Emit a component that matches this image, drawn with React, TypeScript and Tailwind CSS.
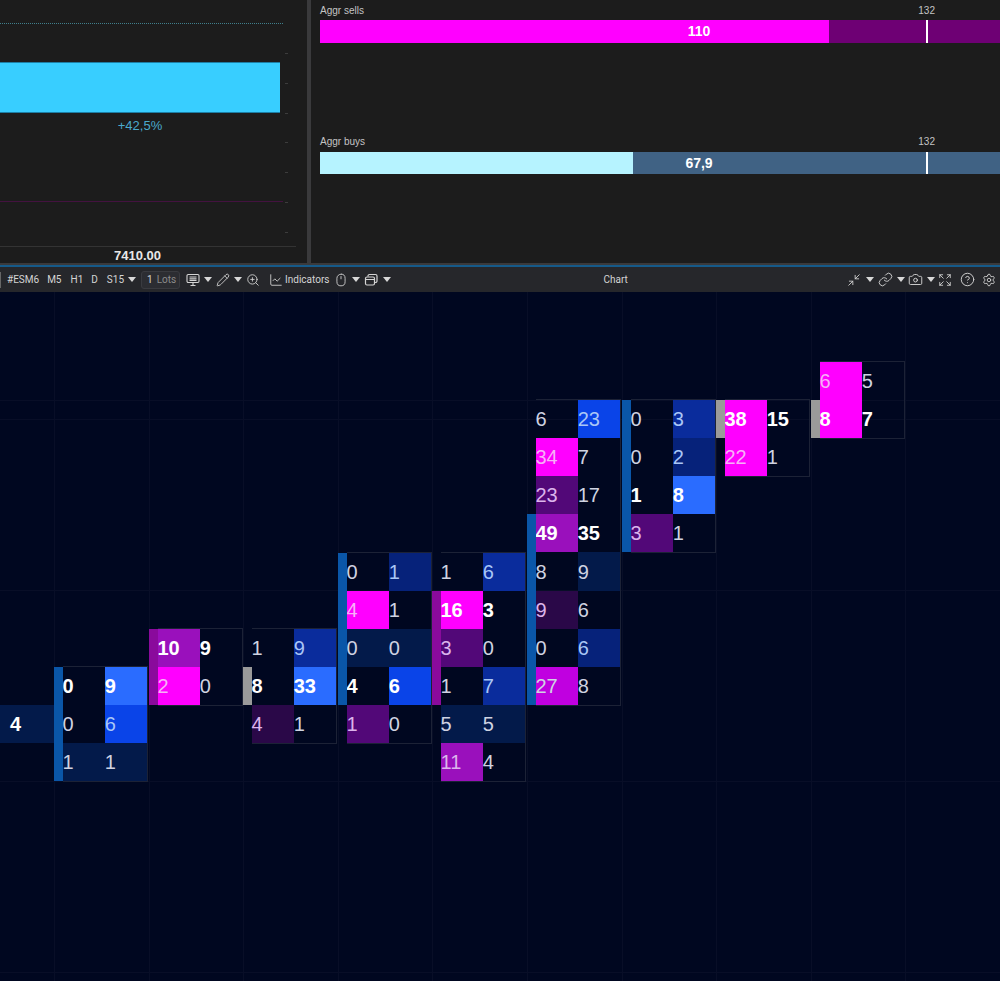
import {
  Camera,
  ChartLine,
  CircleHelp,
  Expand,
  Link,
  Minimize2,
  Mouse,
  Pencil,
  Settings,
  ZoomIn,
} from "lucide-react";

type Cell = { v: string; bg?: string; bold?: boolean };
type Cluster = {
  left: number;
  row: number;
  bar?: string;
  barFrom?: number;
  barRows?: number;
  rows: [Cell, Cell][];
};

const ROW = 38.1;
const TOP = 70; // first row, from top of chart area

const M = "bg-[#ff00ff]";
const M2 = "bg-[#9a10bc]";
const M3 = "bg-[#520878]";
const M4 = "bg-[#2a0848]";
const B1 = "bg-[#2a6cff]";
const B2 = "bg-[#0a44e8]";
const B3 = "bg-[#0a2c9c]";
const B4 = "bg-[#06227a]";
const B5 = "bg-[#031a4a]";

const BLUE = "bg-[#0a56a8]";
const PURPLE = "bg-[#8a0a9c]";
const GREY = "bg-[#9a9a9a]";

// thin digits pick up the colour of the cell under them
const tint = (bg?: string) => {
  if (bg === M) return "text-[#f7b0f7]";
  if (bg === M2 || bg === M3 || bg === M4) return "text-[#dcb4ec]";
  if (bg === B1 || bg === B2 || bg === B3 || bg === B4) return "text-[#a9c6f6]";
  return "text-[#cfd3e2]";
};

const clusters: Cluster[] = [
  { left: 54, row: 8, bar: BLUE, barFrom: 0, barRows: 3, rows: [
    [{ v: "0", bold: true }, { v: "9", bold: true, bg: B1 }],
    [{ v: "0" }, { v: "6", bg: B2 }],
    [{ v: "1", bg: B5 }, { v: "1", bg: B5 }],
  ] },
  { left: 149, row: 7, bar: PURPLE, barFrom: 0, barRows: 2, rows: [
    [{ v: "10", bold: true, bg: M2 }, { v: "9", bold: true }],
    [{ v: "2", bg: M }, { v: "0" }],
  ] },
  { left: 243, row: 7, bar: GREY, barFrom: 1, barRows: 1, rows: [
    [{ v: "1" }, { v: "9", bg: B3 }],
    [{ v: "8", bold: true }, { v: "33", bold: true, bg: B1 }],
    [{ v: "4", bg: M4 }, { v: "1" }],
  ] },
  { left: 338, row: 5, bar: BLUE, barFrom: 0, barRows: 4, rows: [
    [{ v: "0" }, { v: "1", bg: B4 }],
    [{ v: "4", bg: M }, { v: "1" }],
    [{ v: "0", bg: B5 }, { v: "0", bg: B5 }],
    [{ v: "4", bold: true }, { v: "6", bold: true, bg: B2 }],
    [{ v: "1", bg: M3 }, { v: "0" }],
  ] },
  { left: 432, row: 5, bar: PURPLE, barFrom: 1, barRows: 3, rows: [
    [{ v: "1" }, { v: "6", bg: B3 }],
    [{ v: "16", bold: true, bg: M }, { v: "3", bold: true }],
    [{ v: "3", bg: M3 }, { v: "0" }],
    [{ v: "1" }, { v: "7", bg: B3 }],
    [{ v: "5", bg: B5 }, { v: "5", bg: B5 }],
    [{ v: "11", bg: M2 }, { v: "4" }],
  ] },
  { left: 527, row: 1, bar: BLUE, barFrom: 3, barRows: 5, rows: [
    [{ v: "6" }, { v: "23", bg: B2 }],
    [{ v: "34", bg: M }, { v: "7" }],
    [{ v: "23", bg: M3 }, { v: "17" }],
    [{ v: "49", bold: true, bg: M2 }, { v: "35", bold: true }],
    [{ v: "8" }, { v: "9", bg: B5 }],
    [{ v: "9", bg: M4 }, { v: "6" }],
    [{ v: "0" }, { v: "6", bg: B4 }],
    [{ v: "27", bg: "bg-[#c000e0]" }, { v: "8" }],
  ] },
  { left: 622, row: 1, bar: BLUE, barFrom: 0, barRows: 4, rows: [
    [{ v: "0" }, { v: "3", bg: B3 }],
    [{ v: "0" }, { v: "2", bg: B4 }],
    [{ v: "1", bold: true }, { v: "8", bold: true, bg: B1 }],
    [{ v: "3", bg: M3 }, { v: "1" }],
  ] },
  { left: 716, row: 1, bar: GREY, barFrom: 0, barRows: 1, rows: [
    [{ v: "38", bold: true, bg: M }, { v: "15", bold: true }],
    [{ v: "22", bg: M }, { v: "1" }],
  ] },
  { left: 811, row: 0, bar: GREY, barFrom: 1, barRows: 1, rows: [
    [{ v: "6", bg: M }, { v: "5" }],
    [{ v: "8", bold: true, bg: M }, { v: "7", bold: true }],
  ] },
];

const gridX = [54, 149, 243, 338, 432, 527, 622, 716, 811, 905];
const gridY = [108, 127, 298, 489, 680];

function Caret({ className = "" }: { className?: string }) {
  return <span className={`h-0 w-0 shrink-0 border-x-[4px] border-t-[5px] border-x-transparent border-t-[#d8d8d8] ${className}`} />;
}

function ClusterView({ c }: { c: Cluster }) {
  return (
    <div className="absolute flex" style={{ left: c.left, top: TOP + c.row * ROW }}>
      <div className="relative w-[8.5px]">
        <div
          className={`absolute inset-x-0 ${c.bar}`}
          style={{ top: (c.barFrom ?? 0) * ROW, height: (c.barRows ?? 0) * ROW }}
        />
      </div>
      <div className="-mt-px border border-l-0 border-[#1c2236]">
        {c.rows.map((r, i) => (
          <div key={i} className="flex" style={{ height: ROW }}>
            {r.map((cell, j) => (
              <div
                key={j}
                className={`flex w-[42.2px] items-center text-[20px] ${cell.bg ?? ""} ${
                  cell.bold ? "font-bold text-white" : tint(cell.bg)
                }`}
              >
                {cell.v}
              </div>
            ))}
          </div>
        ))}
      </div>
    </div>
  );
}

function PressureBar({ label, fill, rest, value, width }: {
  label: string;
  fill: string;
  rest: string;
  value: string;
  width: number;
}) {
  return (
    <div>
      <div className="flex h-[20px] items-center justify-between text-[10px] text-[#c4c4c4]">
        <span>{label}</span>
        <span className="mr-[65px]">132</span>
      </div>
      <div className={`relative h-[22.6px] ${rest}`}>
        <div className={`h-full ${fill}`} style={{ width }} />
        <span className="absolute left-[359px] top-0 w-[40px] text-center text-[14px] font-bold leading-[23px] text-white">
          {value}
        </span>
        <div className="absolute left-[606px] top-0 h-full w-[1.5px] bg-white" />
      </div>
    </div>
  );
}

export default function App() {
  return (
    <div className="relative h-[981px] w-[1000px] overflow-hidden bg-[#000720] font-['Liberation_Sans',sans-serif]">
      {/* Upper panels */}
      <div className="flex h-[263px] bg-[#1c1c1c]">
        <div className="relative w-[307px] shrink-0">
          <div className="h-[23px]" />
          <div className="w-[283px] border-t border-dotted border-[#3f7f8c]" />
          <div className="h-[38px]" />
          <div className="h-[51px] w-[280px] border-y border-[#1d7fa6] bg-[#38ceff]" />
          <div className="w-[280px] pt-[4px] text-center text-[13px] leading-[18px] text-[#4aa9cc]">+42,5%</div>
          <div className="h-[66px]" />
          <div className="w-[283px] border-t border-[#43123f]" />
          <div className="h-[44px]" />
          <div className="w-[296px] border-t border-[#333333]" />
          <div className="w-[275px] text-center text-[13px] font-bold leading-[17px] text-[#e8e8e8]">7410.00</div>
          {[53, 83, 113, 142, 172, 202, 232].map((y) => (
            <div key={y} className="absolute left-[285px] h-px w-[3px] bg-[#3c3c3c]" style={{ top: y }} />
          ))}
        </div>
        <div className="w-[4px] shrink-0 bg-[#3a3a3c]" />
        <div className="flex-1 pl-[9px]">
          <PressureBar label="Aggr sells" fill={M} rest="bg-[#6e0074]" value="110" width={509} />
          <div className="mt-[89px]">
            <PressureBar label="Aggr buys" fill="bg-[#b6f3ff]" rest="bg-[#406284]" value="67,9" width={313} />
          </div>
        </div>
      </div>
      <div className="h-[2px] bg-[#3a3a3c]" />

      {/* Toolbar */}
      <div className="h-[2px] bg-[#155a8a]" />
      <div className="flex h-[25px] items-center bg-[#26272b] font-['Roboto',sans-serif] text-[10px] text-[#d4d4d4]">
        <div className="h-[16px] w-[1px] bg-[#666666]" />
        <span className="ml-[6px]">#ESM6</span>
        <span className="ml-[8px]">M5</span>
        <span className="ml-[9px]">H1</span>
        <span className="ml-[8px]">D</span>
        <span className="ml-[9px]">S15</span>
        <Caret className="ml-[4px]" />
        <div className="ml-[5px] flex h-[18px] w-[39px] shrink-0 items-center rounded-[3px] border border-[#3a3b40] bg-[#2c2d32] pl-[5px]">
          <span>1</span>
          <span className="ml-[4px] text-[#8c8c8c]">Lots</span>
        </div>
        <svg viewBox="0 0 14 14" className="ml-[6px] h-[14px] w-[14px]" fill="none" stroke="currentColor" strokeWidth="1.1">
          <rect x="1" y="1.5" width="12" height="8" rx="1.2" />
          <path d="M3.5 4h7M3.5 5.7h7M3.5 7.4h7M7 9.5v2.5M4.5 12.5h5" />
        </svg>
        <Caret className="ml-[4px]" />
        <Pencil className="ml-[4px] h-[14px] w-[14px]" strokeWidth={1.5} />
        <Caret className="ml-[4px]" />
        <ZoomIn className="ml-[4px] h-[14px] w-[14px]" strokeWidth={1.5} />
        <ChartLine className="ml-[9px] h-[14px] w-[14px]" strokeWidth={1.5} />
        <span className="ml-[2px]">Indicators</span>
        <Mouse className="ml-[5px] h-[14px] w-[14px]" strokeWidth={1.5} />
        <Caret className="ml-[4px]" />
        <svg viewBox="0 0 14 14" className="ml-[4px] h-[14px] w-[14px]" fill="none" stroke="currentColor" strokeWidth="1.2">
          <rect x="1.5" y="4" width="9" height="8" rx="1.5" />
          <path d="M4 3.5V3a1.5 1.5 0 0 1 1.5-1.5h6A1.5 1.5 0 0 1 13 3v5a1.5 1.5 0 0 1-2 1.4M1.5 6.5h9" />
        </svg>
        <Caret className="ml-[5px]" />
        <span className="ml-[212px]">Chart</span>
        <div className="ml-auto flex items-center pr-[4px]">
          <Minimize2 className="h-[14px] w-[14px]" strokeWidth={1.5} />
          <Caret className="ml-[5px]" />
          <Link className="ml-[4px] h-[15px] w-[15px]" strokeWidth={1.5} />
          <Caret className="ml-[4px]" />
          <Camera className="ml-[3px] h-[15px] w-[15px]" strokeWidth={1.5} />
          <Caret className="ml-[4px]" />
          <Expand className="ml-[3px] h-[14px] w-[14px]" strokeWidth={1.5} />
          <CircleHelp className="ml-[8px] h-[15px] w-[15px]" strokeWidth={1.5} />
          <Settings className="ml-[7px] h-[14px] w-[14px]" strokeWidth={1.5} />
        </div>
      </div>

      {/* Footprint chart */}
      <div className="relative h-[689px]">
        {gridX.map((x) => (
          <div key={x} className="absolute inset-y-0 w-px bg-[#080e27]" style={{ left: x }} />
        ))}
        {gridY.map((y) => (
          <div key={y} className="absolute inset-x-0 h-px bg-[#080e27]" style={{ top: y }} />
        ))}
        <div className="absolute left-0 flex h-[38px] w-[54px] items-center bg-[#031a4a] pl-[10px] text-[20px] font-bold text-white" style={{ top: TOP + 9 * ROW }}>
          4
        </div>
        {clusters.map((c) => (
          <ClusterView key={c.left} c={c} />
        ))}
      </div>
    </div>
  );
}
